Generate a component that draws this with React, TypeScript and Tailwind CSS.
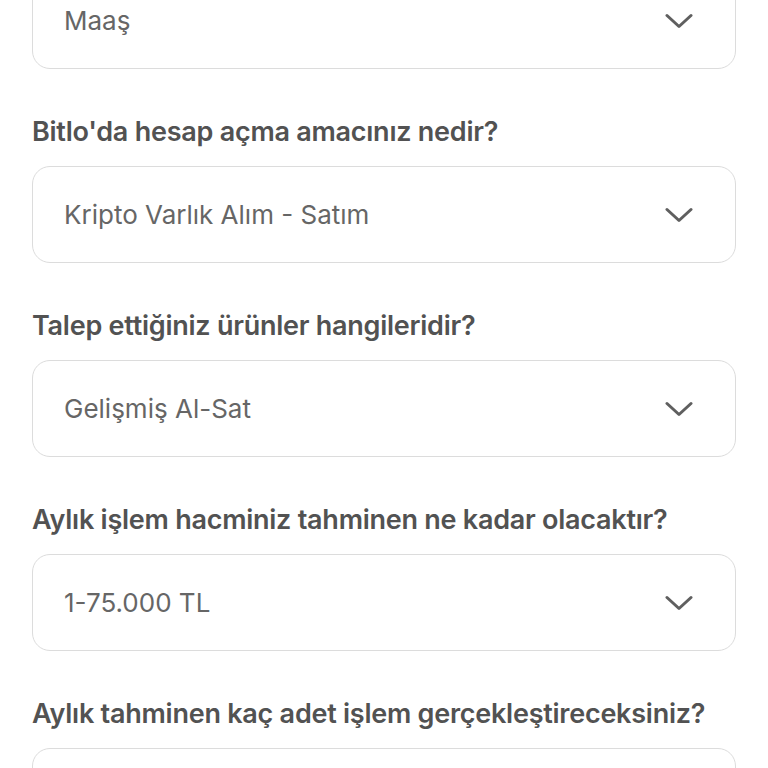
import * as React from 'react';

const fields: { label?: string; value: string }[] = [
	{ value: 'Maaş' },
	{ label: "Bitlo'da hesap açma amacınız nedir?", value: 'Kripto Varlık Alım - Satım' },
	{ label: 'Talep ettiğiniz ürünler hangileridir?', value: 'Gelişmiş Al-Sat' },
	{ label: 'Aylık işlem hacminiz tahminen ne kadar olacaktır?', value: '1-75.000 TL' },
	{ label: 'Aylık tahminen kaç adet işlem gerçekleştireceksiniz?', value: '' },
];

const Chevron: React.FC = () => (
	<svg width="28" height="16" viewBox="0 0 28 16" fill="none" className="shrink-0">
		<path d="M2 2.5 L14 13.5 L26 2.5" stroke="#5f5f5f" strokeWidth="3" strokeLinecap="round" strokeLinejoin="round" />
	</svg>
);

const SelectBox: React.FC<{ value: string }> = ({ value }) => (
	<div className="flex h-[97px] items-center justify-between rounded-[18px] border border-[#dcdcdc] bg-white pl-[31px] pr-[42px]">
		<span className="text-[26px] text-[#666666]">{value}</span>
		{value && <Chevron />}
	</div>
);

export default function App() {
	return (
		<div
			className="h-[768px] overflow-hidden bg-white px-[32px]"
			style={{ fontFamily: 'Inter, "Noto Sans", sans-serif' }}
		>
			<div className="-mt-[28px] flex flex-col">
				{fields.map((f, i) => (
					<div key={i} className="flex flex-col">
						{f.label && (
							<div className="flex h-[97px] items-center pt-[30px]">
								<h3 className="text-[27px] font-semibold tracking-[-0.25px] text-[#525252]">{f.label}</h3>
							</div>
						)}
						<SelectBox value={f.value} />
					</div>
				))}
			</div>
		</div>
	);
}
